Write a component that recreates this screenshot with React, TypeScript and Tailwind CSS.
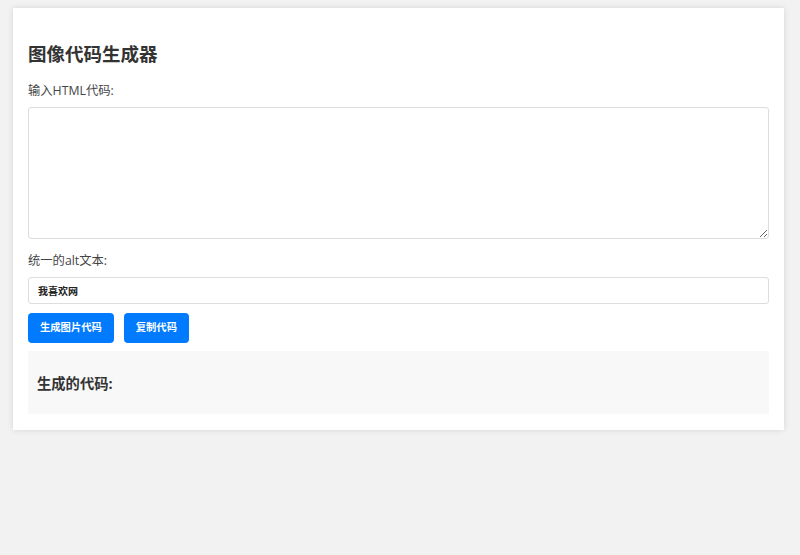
const App = () => {
  return (
    <div className="min-h-[555px] bg-[#f2f2f2] pt-2 pl-[13px] pr-[16px] font-['Open_Sans','Noto_Sans_CJK_SC',sans-serif]">
      <div className="bg-white px-[15px] pt-[15px] pb-[16px] shadow-[0_0_6px_rgba(0,0,0,0.12)]">
        <h2 className="mt-[17px] text-[18.5px] leading-[27px] font-bold text-[#333]">
          图像代码生成器
        </h2>
        <label className="mt-[14px] mb-[6px] block text-[12.3px] leading-[20px] text-[#444]">
          输入HTML代码:
        </label>
        <textarea className="block h-[132px] w-full rounded-[3px] border border-[#ddd] p-2 text-[12px] outline-none" />
        <label className="mt-[12px] mb-[6px] block text-[12.3px] leading-[20px] text-[#444]">
          统一的alt文本:
        </label>
        <input
          className="block h-[27px] w-full rounded-[3px] border border-[#ddd] px-[9px] text-[10px] font-bold text-[#222] outline-none"
          defaultValue="我喜欢网"
        />
        <div className="mt-[9px] flex gap-[10px]">
          <button className="h-[30px] rounded-[4px] bg-[#007bff] px-[12px] text-[10.3px] font-bold text-white">
            生成图片代码
          </button>
          <button className="h-[30px] rounded-[4px] bg-[#007bff] px-[12px] text-[10.3px] font-bold text-white">
            复制代码
          </button>
        </div>
        <div className="mt-[8px] flex h-[63px] items-center bg-[#f8f8f8] px-[9px]">
          <h3 className="pt-[3px] text-[14.3px] font-bold text-[#333]">生成的代码:</h3>
        </div>
      </div>
    </div>
  )
}

export default App
